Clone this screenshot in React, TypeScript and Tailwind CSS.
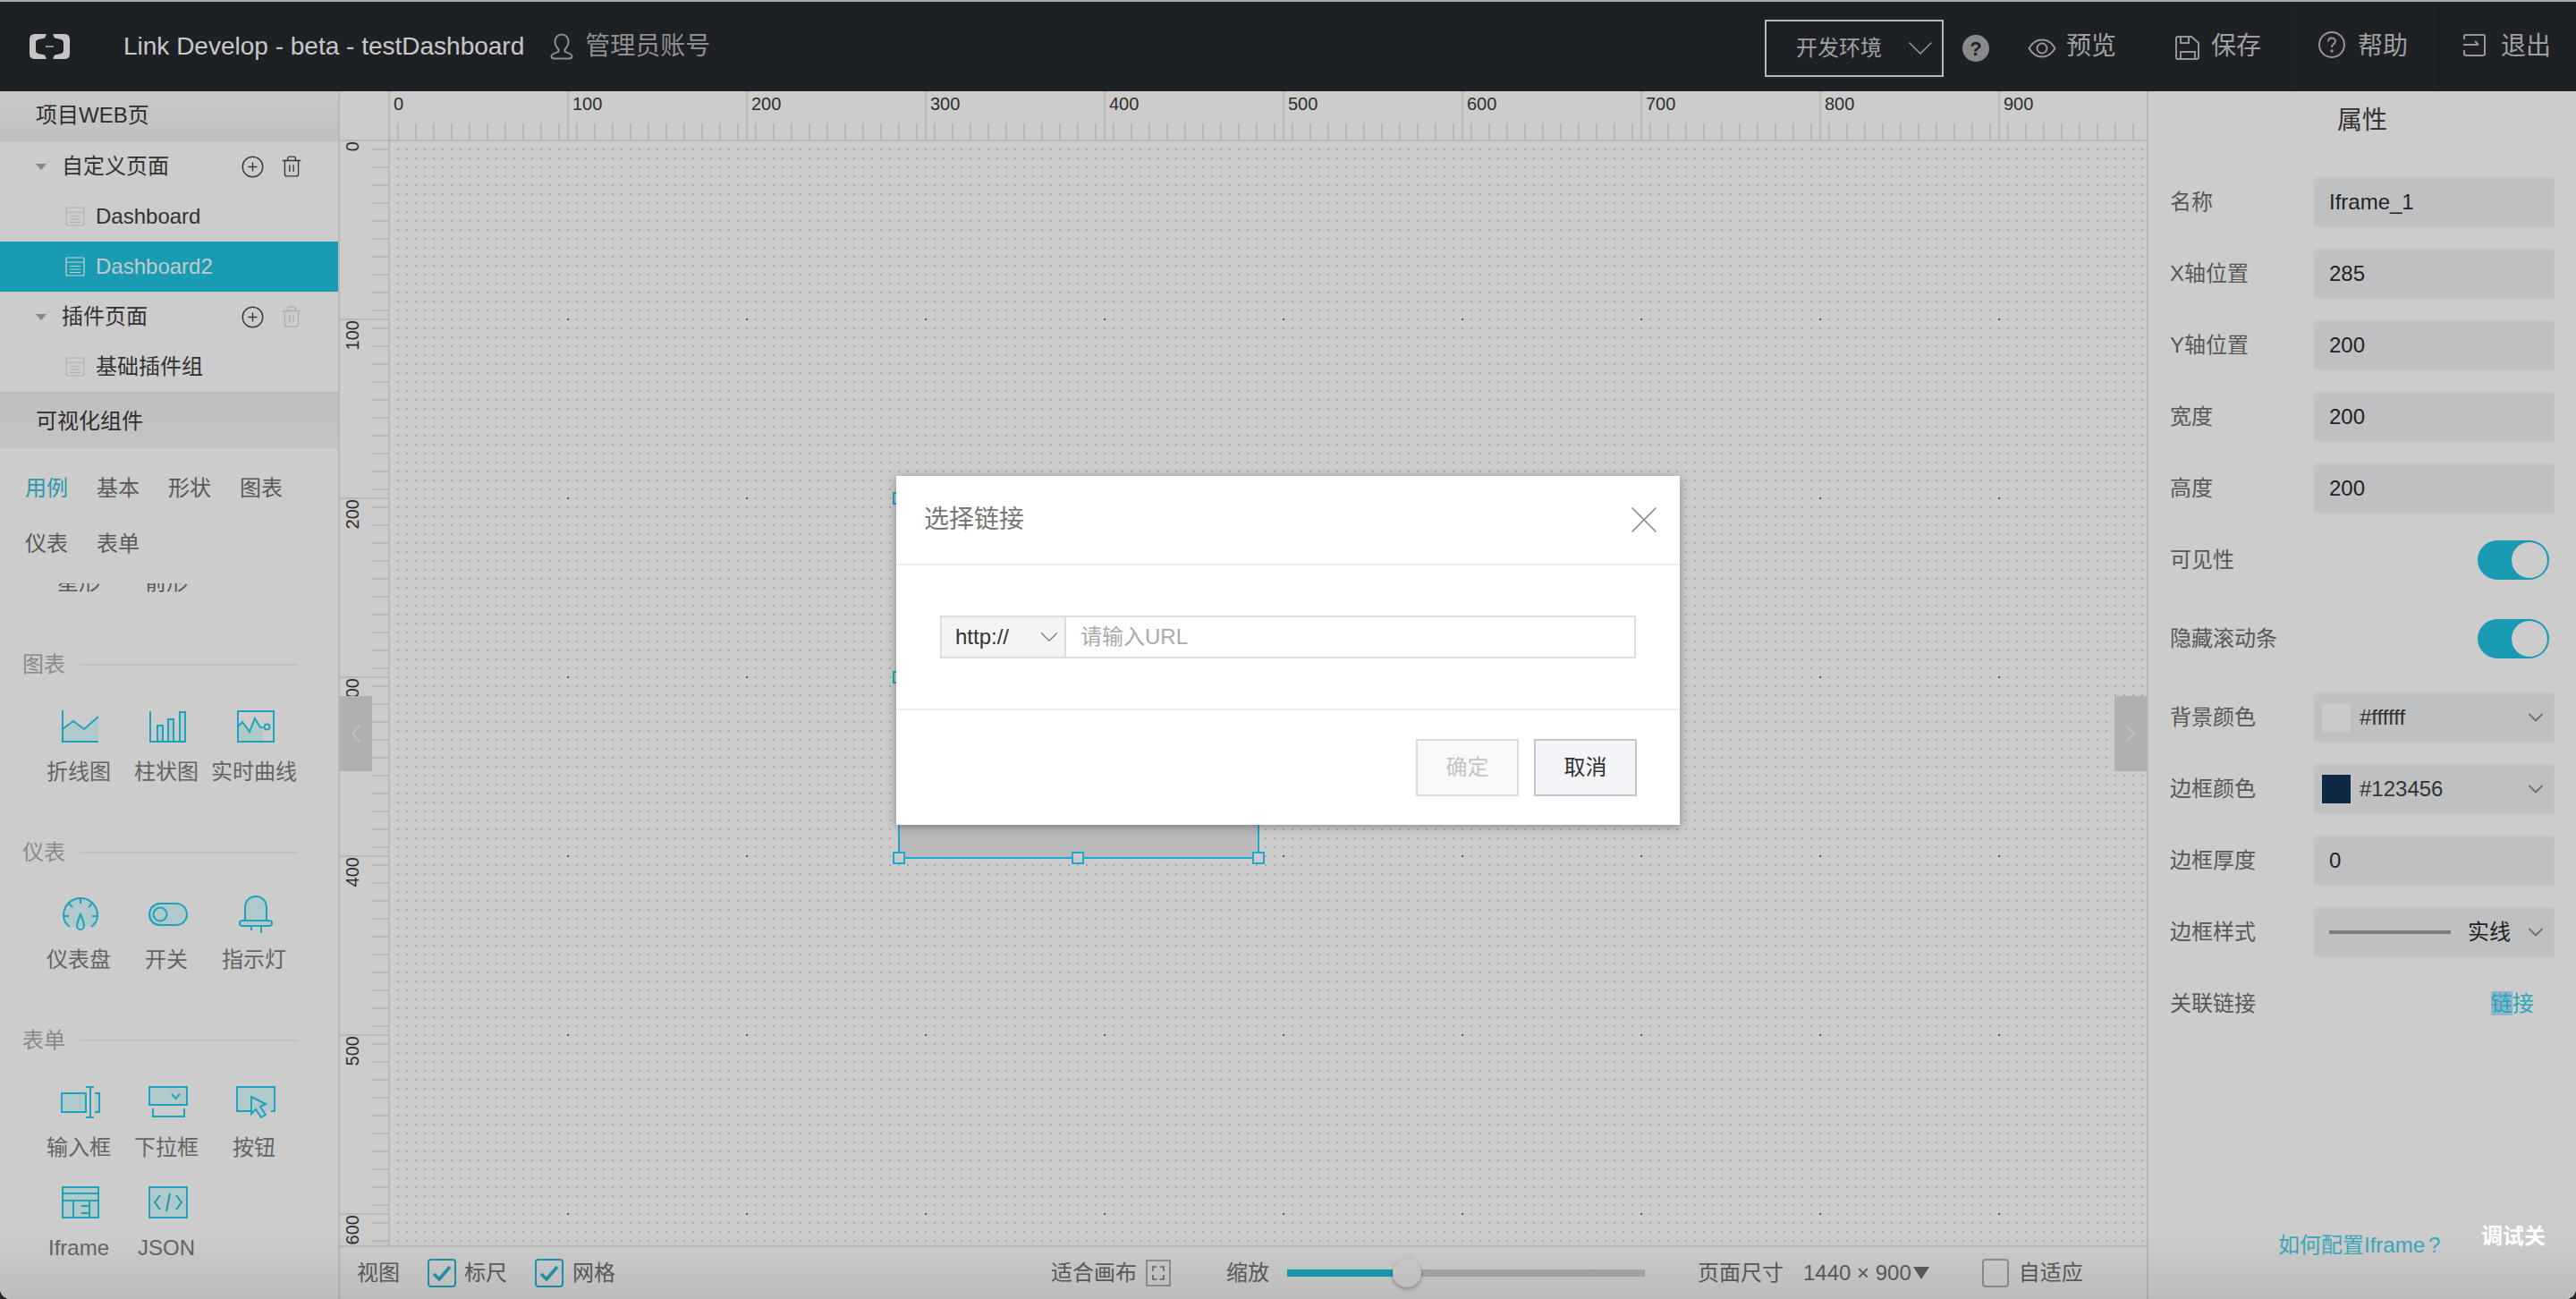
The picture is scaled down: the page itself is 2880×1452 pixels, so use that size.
import { ChevronDown, ChevronLeft, ChevronRight, CirclePlus, Trash2, X } from 'lucide-react';
import type { ReactNode } from 'react';

const STROKE = '#27cceb';
const FILL = '#dcfdff';

function Logo() {
  return (
    <svg width="45" height="28" viewBox="0 0 45 28" fill="#f6f6f6">
      <path d="M19 0l-2 4.500-7 1.500Q7 7 7 9v10q0 2 3 3l7 1.500 2 4.500H6q-6 0-6-6V6q0-6 6-6z" />
      <path d="M26 0l2 4.500 7 1.500q3 1 3 3v10q0 2-3 3l-7 1.500-2 4.500h13q6 0 6-6V6q0-6-6-6z" />
      <rect x="18" y="13" width="9" height="2" fill="#b0b0b0" />
    </svg>
  );
}

function UserIcon() {
  return (
    <svg width="26" height="30" viewBox="0 0 26 30" fill="none" stroke="#b3b3b3" strokeWidth="2">
      <path d="M13 1.500c-4.600 0-7.500 3.500-7.500 8 0 3.800 2 6.600 4 8.600v2.400c0 1.400-8 1.600-8 5.200 0 1.600 1.400 2.800 3 2.800h17c1.600 0 3-1.200 3-2.800 0-3.600-8-3.800-8-5.200v-2.400c2-2 4-4.800 4-8.600 0-4.500-2.900-8-7.500-8z" />
    </svg>
  );
}

function EyeIcon() {
  return (
    <svg width="32" height="22" viewBox="0 0 32 22" fill="none" stroke="#bcbcbc" strokeWidth="2">
      <path d="M1.500 11C5 5 10 1.500 16 1.500S27 5 30.500 11C27 17 22 20.500 16 20.500S5 17 1.500 11z" />
      <circle cx="16" cy="11" r="5.500" />
    </svg>
  );
}

function SaveIcon() {
  return (
    <svg width="27" height="27" viewBox="0 0 27 27" fill="none" stroke="#bcbcbc" strokeWidth="2">
      <path d="M3 1h15l8 7v16a2 2 0 0 1-2 2H3a2 2 0 0 1-2-2V3a2 2 0 0 1 2-2z" />
      <path d="M6 1v7h9V1M6 26v-8h16v8" />
    </svg>
  );
}

function HelpIcon() {
  return (
    <svg width="30" height="30" viewBox="0 0 30 30" fill="none" stroke="#bcbcbc" strokeWidth="2">
      <circle cx="15" cy="15" r="14" />
      <path d="M11 11.500c0-2.500 1.800-4 4-4s4 1.600 4 3.700c0 3-4 3.300-4 6.500" />
      <circle cx="15" cy="22" r="0.700" />
    </svg>
  );
}

function ExitIcon() {
  return (
    <svg width="26" height="25" viewBox="0 0 26 25" fill="none" stroke="#bcbcbc" strokeWidth="2">
      <path d="M2 6V3a2 2 0 0 1 2-2h19a2 2 0 0 1 2 2v19a2 2 0 0 1-2 2H4a2 2 0 0 1-2-2v-4" />
      <path d="M1 12h17M14 8l4 4" />
    </svg>
  );
}

function PageIcon({ color }: { color: string }) {
  return (
    <svg width="22" height="22" viewBox="0 0 22 22" fill="none" stroke={color} strokeWidth="1.200">
      <rect x="1" y="1" width="20" height="20" rx="1" />
      <path d="M1 6h20M5 10.500h12M5 14h12M5 17.500h12" />
    </svg>
  );
}

function LineIcon() {
  return (
    <svg width="42" height="36" viewBox="0 0 42 36" fill="none" stroke={STROKE} strokeWidth="2">
      <path d="M1 21l12-9 12 9 16-14v28H1z" fill={FILL} stroke="none" />
      <path d="M1 21l12-9 12 9 16-14M1 0v35h40" />
    </svg>
  );
}

function BarIcon() {
  return (
    <svg width="42" height="36" viewBox="0 0 42 36" fill="none" stroke={STROKE} strokeWidth="2">
      <path d="M9 17h6v18H9zM21 10h6v25h-6zM34 2h6v33h-6z" fill={FILL} />
      <path d="M1 1v34h40" />
    </svg>
  );
}

function RealtimeIcon() {
  return (
    <svg width="42" height="36" viewBox="0 0 42 36" fill="none" stroke={STROKE} strokeWidth="2">
      <path d="M1 18l5-5 8 11 6-15 6 10h3v16H1z" fill={FILL} stroke="none" />
      <rect x="1" y="1" width="40" height="34" />
      <path d="M1 18l5-5 8 11 6-15 6 10h3" />
      <circle cx="33.500" cy="18.500" r="3" />
    </svg>
  );
}

function GaugeIcon() {
  return (
    <svg width="40" height="38" viewBox="0 0 40 38" fill="none" stroke={STROKE} strokeWidth="2">
      <path d="M8 33C3 29.500 1 25 1 20 1 9.500 9.500 1 20 1s19 8.500 19 19c0 5-2 9.500-7 13z" fill={FILL} stroke="none" />
      <path d="M8 33C3 29.500 1 25 1 20 1 9.500 9.500 1 20 1s19 8.500 19 19c0 5-2 9.500-7 13" />
      <path d="M20 1v6M7 7l4 4M33 7l-4 4M1 21h6M33 21h6" />
      <path d="M20 18c-1.500 6-4 9-4 14a4 4 0 0 0 8 0c0-5-2.500-8-4-14z" />
    </svg>
  );
}

function SwitchIcon() {
  return (
    <svg width="44" height="26" viewBox="0 0 44 26" fill="none" stroke={STROKE} strokeWidth="2">
      <rect x="1" y="1" width="42" height="24" rx="12" fill={FILL} />
      <circle cx="13" cy="13" r="7.500" fill={FILL} />
      <path d="M13 1a12 12 0 0 0 0 24" />
    </svg>
  );
}

function LampIcon() {
  return (
    <svg width="38" height="42" viewBox="0 0 38 42" fill="none" stroke={STROKE} strokeWidth="2">
      <path d="M7 28V14C7 6 12 1 19 1s12 5 12 13v14z" fill={FILL} />
      <rect x="1" y="28" width="36" height="6" rx="3" fill={FILL} />
      <path d="M14 34v5M25 34v8" />
    </svg>
  );
}

function InputIcon() {
  return (
    <svg width="44" height="36" viewBox="0 0 44 36" fill="none" stroke={STROKE} strokeWidth="2">
      <path d="M1 8h27v21H1z" fill={FILL} />
      <path d="M38 8h5v21h-5z" fill={FILL} stroke="none" />
      <path d="M38 8h5v21h-5" />
      <path d="M33 1v34M28 1h9M28 35h9" />
    </svg>
  );
}

function SelectIcon() {
  return (
    <svg width="44" height="36" viewBox="0 0 44 36" fill="none" stroke={STROKE} strokeWidth="2">
      <rect x="1" y="1" width="42" height="20" fill={FILL} />
      <path d="M26 9l4.500 5L35 9" />
      <path d="M5 25v9h35v-9" />
    </svg>
  );
}

function ButtonIcon() {
  return (
    <svg width="44" height="36" viewBox="0 0 44 36" fill="none" stroke={STROKE} strokeWidth="2">
      <path d="M1 1h42v27H1z" fill={FILL} stroke="none" />
      <path d="M16 28H1V1h42v27h-4" />
      <path d="M17 12l16 8-6 3 6 9-5 3-6-9-5 5z" fill={FILL} />
    </svg>
  );
}

function IframeIcon() {
  return (
    <svg width="42" height="36" viewBox="0 0 42 36" fill="none" stroke={STROKE} strokeWidth="2">
      <rect x="1" y="1" width="40" height="34" fill={FILL} />
      <path d="M1 8h40M1 16h40M13 16v19M22 22h9v8M22 30h9M31 16v19" />
    </svg>
  );
}

function JsonIcon() {
  return (
    <svg width="44" height="36" viewBox="0 0 44 36" fill="none" stroke={STROKE} strokeWidth="2">
      <rect x="1" y="1" width="42" height="34" fill={FILL} />
      <path d="M13 10l-6 8 6 8M31 10l6 8-6 8M24 8l-4 20" stroke="#27bcd8" />
    </svg>
  );
}

function CheckBox({ checked }: { checked?: boolean }) {
  if (!checked) {
    return <div className="h-[32px] w-[30px] rounded-[4px] border-2 border-[#b5b5b5]" />;
  }
  return (
    <div className="flex h-[32px] w-[32px] items-center justify-center rounded-[4px] border-2 border-[#27bcd8]">
      <svg width="22" height="20" viewBox="0 0 22 20" fill="none" stroke="#27bcd8" strokeWidth="3.500">
        <path d="M2 11l6 6L20 3" />
      </svg>
    </div>
  );
}

function Ruler() {
  return (
    <div className="flex h-[56px] shrink-0 overflow-hidden border-b-2 border-[#e6e6e6]">
      <div className="w-[54px] shrink-0" />
      {[0, 100, 200, 300, 400, 500, 600, 700, 800, 900].map((n) => (
        <div
          key={n}
          className="h-full w-[200px] shrink-0 border-l-2 border-[#e6e6e6] bg-[linear-gradient(90deg,#e6e6e6_2px,transparent_2px)] bg-[size:20px_18px] bg-bottom bg-repeat-x bg-origin-border pl-[4px] text-[20px] leading-[28px] text-[#3a3a3a]"
        >
          {n}
        </div>
      ))}
    </div>
  );
}

function VerticalRuler() {
  return (
    <div className="w-[56px] shrink-0 overflow-hidden border-r-2 border-[#e6e6e6]">
      <div className="-mt-[2px]">
        {[0, 100, 200, 300, 400, 500, 600].map((n) => (
          <div
            key={n}
            className="h-[200px] border-t-2 border-[#e6e6e6] bg-[linear-gradient(#e6e6e6_2px,transparent_2px)] bg-[size:18px_20px] bg-right bg-repeat-y bg-origin-border pl-[2px]"
          >
            <div className="h-fit w-[24px] rotate-180 text-[20px] leading-[24px] text-[#3a3a3a] [writing-mode:vertical-rl]">{n}</div>
          </div>
        ))}
      </div>
    </div>
  );
}

function Handle({ className }: { className: string }) {
  return <div className={`absolute h-[14px] w-[14px] border-2 border-[#26d2ff] bg-[#fefefe] ${className}`} />;
}

function TreeGroup({ title, muted }: { title: string; muted?: boolean }) {
  return (
    <div className="flex h-[56px] items-center pl-[40px] pr-[39px] text-[24px] text-[#404040]">
      <div className="h-0 w-0 border-x-[6px] border-t-[7px] border-x-transparent border-t-[#a8a8a8]" />
      <span className="ml-[17px] flex-1">{title}</span>
      <CirclePlus size={27} strokeWidth={1.3} className="text-[#4a4a4a]" />
      <Trash2 size={26} strokeWidth={1.3} className={`ml-[17px] ${muted ? 'text-[#dadada]' : 'text-[#4a4a4a]'}`} />
    </div>
  );
}

function TreeItem({ title, active }: { title: string; active?: boolean }) {
  return (
    <div className={`flex h-[56px] items-center pl-[73px] text-[24px] ${active ? 'bg-[#20c2e0] text-[#f0fdff]' : 'text-[#404040]'}`}>
      <PageIcon color={active ? '#ffffff' : '#dcdcdc'} />
      <span className="ml-[12px]">{title}</span>
    </div>
  );
}

function Widget({ icon, label }: { icon: ReactNode; label: string }) {
  return (
    <div className="flex h-[112px] w-[98px] flex-col items-center pt-[12px]">
      <div className="ml-[3px] flex h-[36px] items-center">{icon}</div>
      <div className="mt-[17px] whitespace-nowrap text-[24px] leading-[32px] text-[#7d7d7d]">{label}</div>
    </div>
  );
}

function WidgetGroup({ title, items }: { title: string; items: { icon: ReactNode; label: string }[] }) {
  return (
    <div className="mb-[42px]">
      <div className="flex h-[34px] items-center pl-[25px] pr-[45px]">
        <span className="text-[24px] text-[#adadad]">{title}</span>
        <div className="ml-[16px] h-[2px] flex-1 bg-[#f0f0f0]" />
      </div>
      <div className="mt-[22px] flex flex-wrap pl-[39px]">
        {items.map((item) => (
          <Widget key={item.label} icon={item.icon} label={item.label} />
        ))}
      </div>
    </div>
  );
}

function Sidebar() {
  return (
    <div className="flex w-[380px] shrink-0 flex-col border-r-2 border-[#e6e6e6] bg-white">
      <div className="flex h-[56px] items-center bg-linear-to-b from-[#fbfbfb] to-[#f0f0f0] pb-[2px] pl-[40px] text-[24px] text-[#3a3a3a]">项目WEB页</div>
      <TreeGroup title="自定义页面" />
      <TreeItem title="Dashboard" />
      <TreeItem title="Dashboard2" active />
      <TreeGroup title="插件页面" muted />
      <TreeItem title="基础插件组" />
      <div className="flex h-[64px] items-center border-t-2 border-[#e8e8e8] bg-linear-to-b from-[#f0f0f0] to-[#f5f5f5] pl-[40px] text-[24px] text-[#3a3a3a]">可视化组件</div>
      <div className="flex flex-wrap py-[13px] pl-[28px] text-[24px] leading-[62px] text-[#707070]">
        <span className="mr-[32px] text-[#35bfd8]">用例</span>
        <span className="mr-[32px]">基本</span>
        <span className="mr-[32px]">形状</span>
        <span className="mr-[32px]">图表</span>
        <span className="mr-[32px]">仪表</span>
        <span className="mr-[32px]">表单</span>
      </div>
      <div className="flex-1 overflow-hidden">
        <div className="-mt-[17px] mb-[59px] flex pl-[39px] text-[24px] leading-[32px] text-[#707070]">
          <div className="w-[98px] text-center">星形</div>
          <div className="w-[98px] text-center">箭形</div>
        </div>
        <WidgetGroup
          title="图表"
          items={[
            { icon: <LineIcon />, label: '折线图' },
            { icon: <BarIcon />, label: '柱状图' },
            { icon: <RealtimeIcon />, label: '实时曲线' },
          ]}
        />
        <WidgetGroup
          title="仪表"
          items={[
            { icon: <GaugeIcon />, label: '仪表盘' },
            { icon: <SwitchIcon />, label: '开关' },
            { icon: <LampIcon />, label: '指示灯' },
          ]}
        />
        <WidgetGroup
          title="表单"
          items={[
            { icon: <InputIcon />, label: '输入框' },
            { icon: <SelectIcon />, label: '下拉框' },
            { icon: <ButtonIcon />, label: '按钮' },
            { icon: <IframeIcon />, label: 'Iframe' },
            { icon: <JsonIcon />, label: 'JSON' },
          ]}
        />
      </div>
    </div>
  );
}

function BottomBar() {
  return (
    <div className="flex h-[60px] shrink-0 items-center border-t-2 border-[#e6e6e6] pl-[19px] text-[24px] text-[#747474]">
      <span>视图</span>
      <div className="ml-[31px]"><CheckBox checked /></div>
      <span className="ml-[9px]">标尺</span>
      <div className="ml-[31px]"><CheckBox checked /></div>
      <span className="ml-[10px]">网格</span>
      <span className="ml-[487px]">适合画布</span>
      <div className="ml-[10px] flex h-[30px] w-[28px] items-center justify-center border-2 border-[#b5b5b5]">
        <div className="h-[16px] w-[14px] border-2 border-dashed border-[#9a9a9a]" />
      </div>
      <span className="ml-[62px]">缩放</span>
      <div className="relative ml-[20px] h-[8px] w-[400px] bg-[#d4d4d4]">
        <div className="h-full w-[118px] bg-[#20c2e0]" />
        <div className="absolute -top-[12px] left-[118px] h-[32px] w-[32px] rounded-full bg-white shadow-[0_2px_4px_rgba(0,0,0,0.3)]" />
      </div>
      <span className="ml-[59px]">页面尺寸</span>
      <span className="ml-[22px]">1440 × 900</span>
      <div className="ml-[2px] h-0 w-0 border-x-[9px] border-t-[14px] border-x-transparent border-t-[#747474]" />
      <div className="ml-[59px]"><CheckBox /></div>
      <span className="ml-[11px]">自适应</span>
    </div>
  );
}

function Field({ label, children, spaced }: { label: string; children: ReactNode; spaced?: boolean }) {
  return (
    <div className={`flex h-[56px] items-center justify-between px-[24px] text-[24px] text-[#6e6e6e] ${spaced ? 'mt-[32px]' : 'mt-[24px]'}`}>
      <span>{label}</span>
      {children}
    </div>
  );
}

function Box({ children }: { children: ReactNode }) {
  return (
    <div className="flex h-[56px] w-[270px] items-center rounded-[4px] border-[3px] border-[#f4f4f4] bg-[#eff0f2] pl-[15px] pr-[4px] text-[24px] text-[#2b2b2b]">
      {children}
    </div>
  );
}

function Toggle() {
  return (
    <div className="mr-[6px] flex h-[44px] w-[80px] items-center justify-end rounded-full bg-[#20c2e0] pr-[2px]">
      <div className="h-[40px] w-[40px] rounded-full bg-white" />
    </div>
  );
}

function Arrow() {
  return <ChevronDown size={28} strokeWidth={1.6} className="text-[#8a8a8a]" />;
}

function Properties() {
  return (
    <div className="relative flex w-[480px] shrink-0 flex-col border-l-2 border-[#e6e6e6] bg-white">
      <div className="mt-[16px] h-[56px] text-center text-[28px] leading-[34px] text-[#404040]">属性</div>
      <Field label="名称"><Box>Iframe_1</Box></Field>
      <Field label="X轴位置"><Box>285</Box></Field>
      <Field label="Y轴位置"><Box>200</Box></Field>
      <Field label="宽度"><Box>200</Box></Field>
      <Field label="高度"><Box>200</Box></Field>
      <Field label="可见性"><Toggle /></Field>
      <Field label="隐藏滚动条" spaced><Toggle /></Field>
      <Field label="背景颜色" spaced>
        <Box>
          <div className="-ml-[8px] h-[32px] w-[32px] bg-[#fdfdfd]" />
          <span className="ml-[10px] flex-1 text-[#404040]">#ffffff</span>
          <Arrow />
        </Box>
      </Field>
      <Field label="边框颜色">
        <Box>
          <div className="-ml-[8px] h-[32px] w-[32px] bg-[#123456]" />
          <span className="ml-[10px] flex-1 text-[#404040]">#123456</span>
          <Arrow />
        </Box>
      </Field>
      <Field label="边框厚度"><Box>0</Box></Field>
      <Field label="边框样式">
        <Box>
          <div className="h-[4px] w-[136px] bg-[#9c9c9c]" />
          <span className="ml-[19px] flex-1">实线</span>
          <Arrow />
        </Box>
      </Field>
      <Field label="关联链接">
        <span className="mr-[23px] text-[#34cee9]">
          <span className="bg-[#b6e1ff]">链</span>接
        </span>
      </Field>
      <div className="absolute left-[145px] top-[1276px] text-[24px] leading-[28px] text-[#48d2ea]">
        如何配置Iframe<span className="ml-[4px]">?</span>
      </div>
    </div>
  );
}

function Modal() {
  return (
    <div className="absolute left-[1002px] top-[532px] z-20 flex h-[390px] w-[876px] flex-col bg-white shadow-[0_2px_10px_rgba(0,0,0,0.35)]">
      <div className="flex h-[100px] shrink-0 items-center justify-between border-b-2 border-[#eeeeee] pl-[31px] pr-[14px]">
        <span className="text-[28px] text-[#777777]">选择链接</span>
        <X size={52} strokeWidth={0.8} className="text-[#888888]" />
      </div>
      <div className="flex h-[162px] shrink-0 items-start border-b-2 border-[#eeeeee] px-[49px] pt-[56px]">
        <div className="flex h-[48px] w-full border-2 border-[#dddddd] text-[24px]">
          <div className="flex w-[139px] shrink-0 items-center border-r-2 border-[#dddddd] bg-[#f4f4f4] pl-[15px] text-[#333333]">
            <span className="flex-1">http://</span>
            <ChevronDown size={34} strokeWidth={0.8} className="text-[#777777]" />
          </div>
          <div className="flex flex-1 items-center pl-[16px] text-[#aaaaaa]">请输入URL</div>
        </div>
      </div>
      <div className="flex justify-end gap-[17px] pl-[48px] pr-[48px] pt-[32px] text-[24px]">
        <div className="flex h-[64px] w-[115px] items-center justify-center border-2 border-[#dcdcdc] bg-[#f9f9fb] text-[#c4c4c4]">确定</div>
        <div className="flex h-[64px] w-[115px] items-center justify-center border-2 border-[#c4c6cc] bg-[#f4f5f8] text-[#333333]">取消</div>
      </div>
    </div>
  );
}

export default function App() {
  return (
    <div className="h-[1452px] w-[2880px] overflow-hidden bg-[#2e2420] font-['Liberation_Sans','Noto_Sans_CJK_SC',sans-serif]">
      <div className="relative flex h-full flex-col overflow-hidden rounded-b-[12px] bg-white">
        <div className="h-[2px] shrink-0 bg-[#d8d8d8]" />
        {/* top bar */}
        <div className="flex h-[100px] shrink-0 items-center bg-[#25282e] pl-[33px] pr-[28px]">
          <Logo />
          <span className="ml-[60px] text-[28px] text-[#fafafa]">Link Develop - beta - testDashboard</span>
          <div className="ml-[29px]"><UserIcon /></div>
          <span className="ml-[13px] text-[28px] text-[#b3b3b3]">管理员账号</span>
          <div className="flex-1" />
          <div className="mt-[4px] flex h-[64px] w-[200px] items-center justify-between border-2 border-[#e8e8e8] pl-[33px] text-[24px] text-[#c8c8c8]">
            <span>开发环境</span>
            <ChevronDown size={48} strokeWidth={0.7} />
          </div>
          <div className="ml-[21px] mt-[4px] flex h-[30px] w-[30px] items-center justify-center rounded-full bg-[#adadad] text-[22px] font-bold text-[#25282e]">?</div>
          <div className="ml-[43px] mt-[4px]"><EyeIcon /></div>
          <span className="ml-[11px] text-[28px] text-[#c8c8c8]">预览</span>
          <div className="ml-[66px] mt-[2px]"><SaveIcon /></div>
          <span className="ml-[13px] text-[28px] text-[#c8c8c8]">保存</span>
          <div className="ml-[32px] h-full w-px bg-[#2b2e35]" />
          <div className="-mt-[4px] ml-[31px]"><HelpIcon /></div>
          <span className="ml-[14px] text-[28px] text-[#c8c8c8]">帮助</span>
          <div className="ml-[29px] h-full w-px bg-[#2b2e35]" />
          <div className="-mt-[4px] ml-[31px]"><ExitIcon /></div>
          <span className="ml-[17px] text-[28px] text-[#c8c8c8]">退出</span>
        </div>

        <div className="flex min-h-0 flex-1">
          <Sidebar />
          <div className="relative flex min-w-0 flex-1 flex-col">
            <Ruler />
            <div className="flex min-h-0 flex-1">
              <VerticalRuler />
              <div className="relative flex-1 bg-[image:conic-gradient(from_270deg_at_2px_2px,#6b6b6b_25%,transparent_0),conic-gradient(from_270deg_at_2px_2px,#d4d4d4_25%,transparent_0)] bg-[size:200px_200px,10px_10px] bg-[position:198px_198px,8px_8px]">
                <div className="absolute left-[568px] top-[398px] h-[404px] w-[404px] border-2 border-[#26d2ff] bg-[#e8e8e8]">
                  <Handle className="-left-[8px] -top-[8px]" />
                  <Handle className="-left-[8px] top-[192px]" />
                  <Handle className="-bottom-[8px] -left-[8px]" />
                  <Handle className="-bottom-[8px] left-[192px]" />
                  <Handle className="-bottom-[8px] -right-[8px]" />
                </div>
              </div>
            </div>
            <BottomBar />
            <div className="absolute left-0 top-[676px] flex h-[84px] w-[36px] items-center justify-center bg-[#dcdddc] text-[#eeeeee]">
              <ChevronLeft size={32} strokeWidth={1.5} />
            </div>
            <div className="absolute right-0 top-[676px] flex h-[84px] w-[36px] items-center justify-center bg-[#dcdddc] text-[#eeeeee]">
              <ChevronRight size={32} strokeWidth={1.5} />
            </div>
          </div>
          <Properties />
        </div>

        <div className="absolute inset-0 z-10 bg-black/20" />
        <div className="pointer-events-none absolute inset-x-0 bottom-0 z-10 h-[72px] bg-linear-to-b from-transparent to-black/8" />
        <Modal />
        <div className="absolute left-[2774px] top-[1366px] z-20 text-[24px] font-bold leading-[32px] text-white">调试关</div>
      </div>
    </div>
  );
}
